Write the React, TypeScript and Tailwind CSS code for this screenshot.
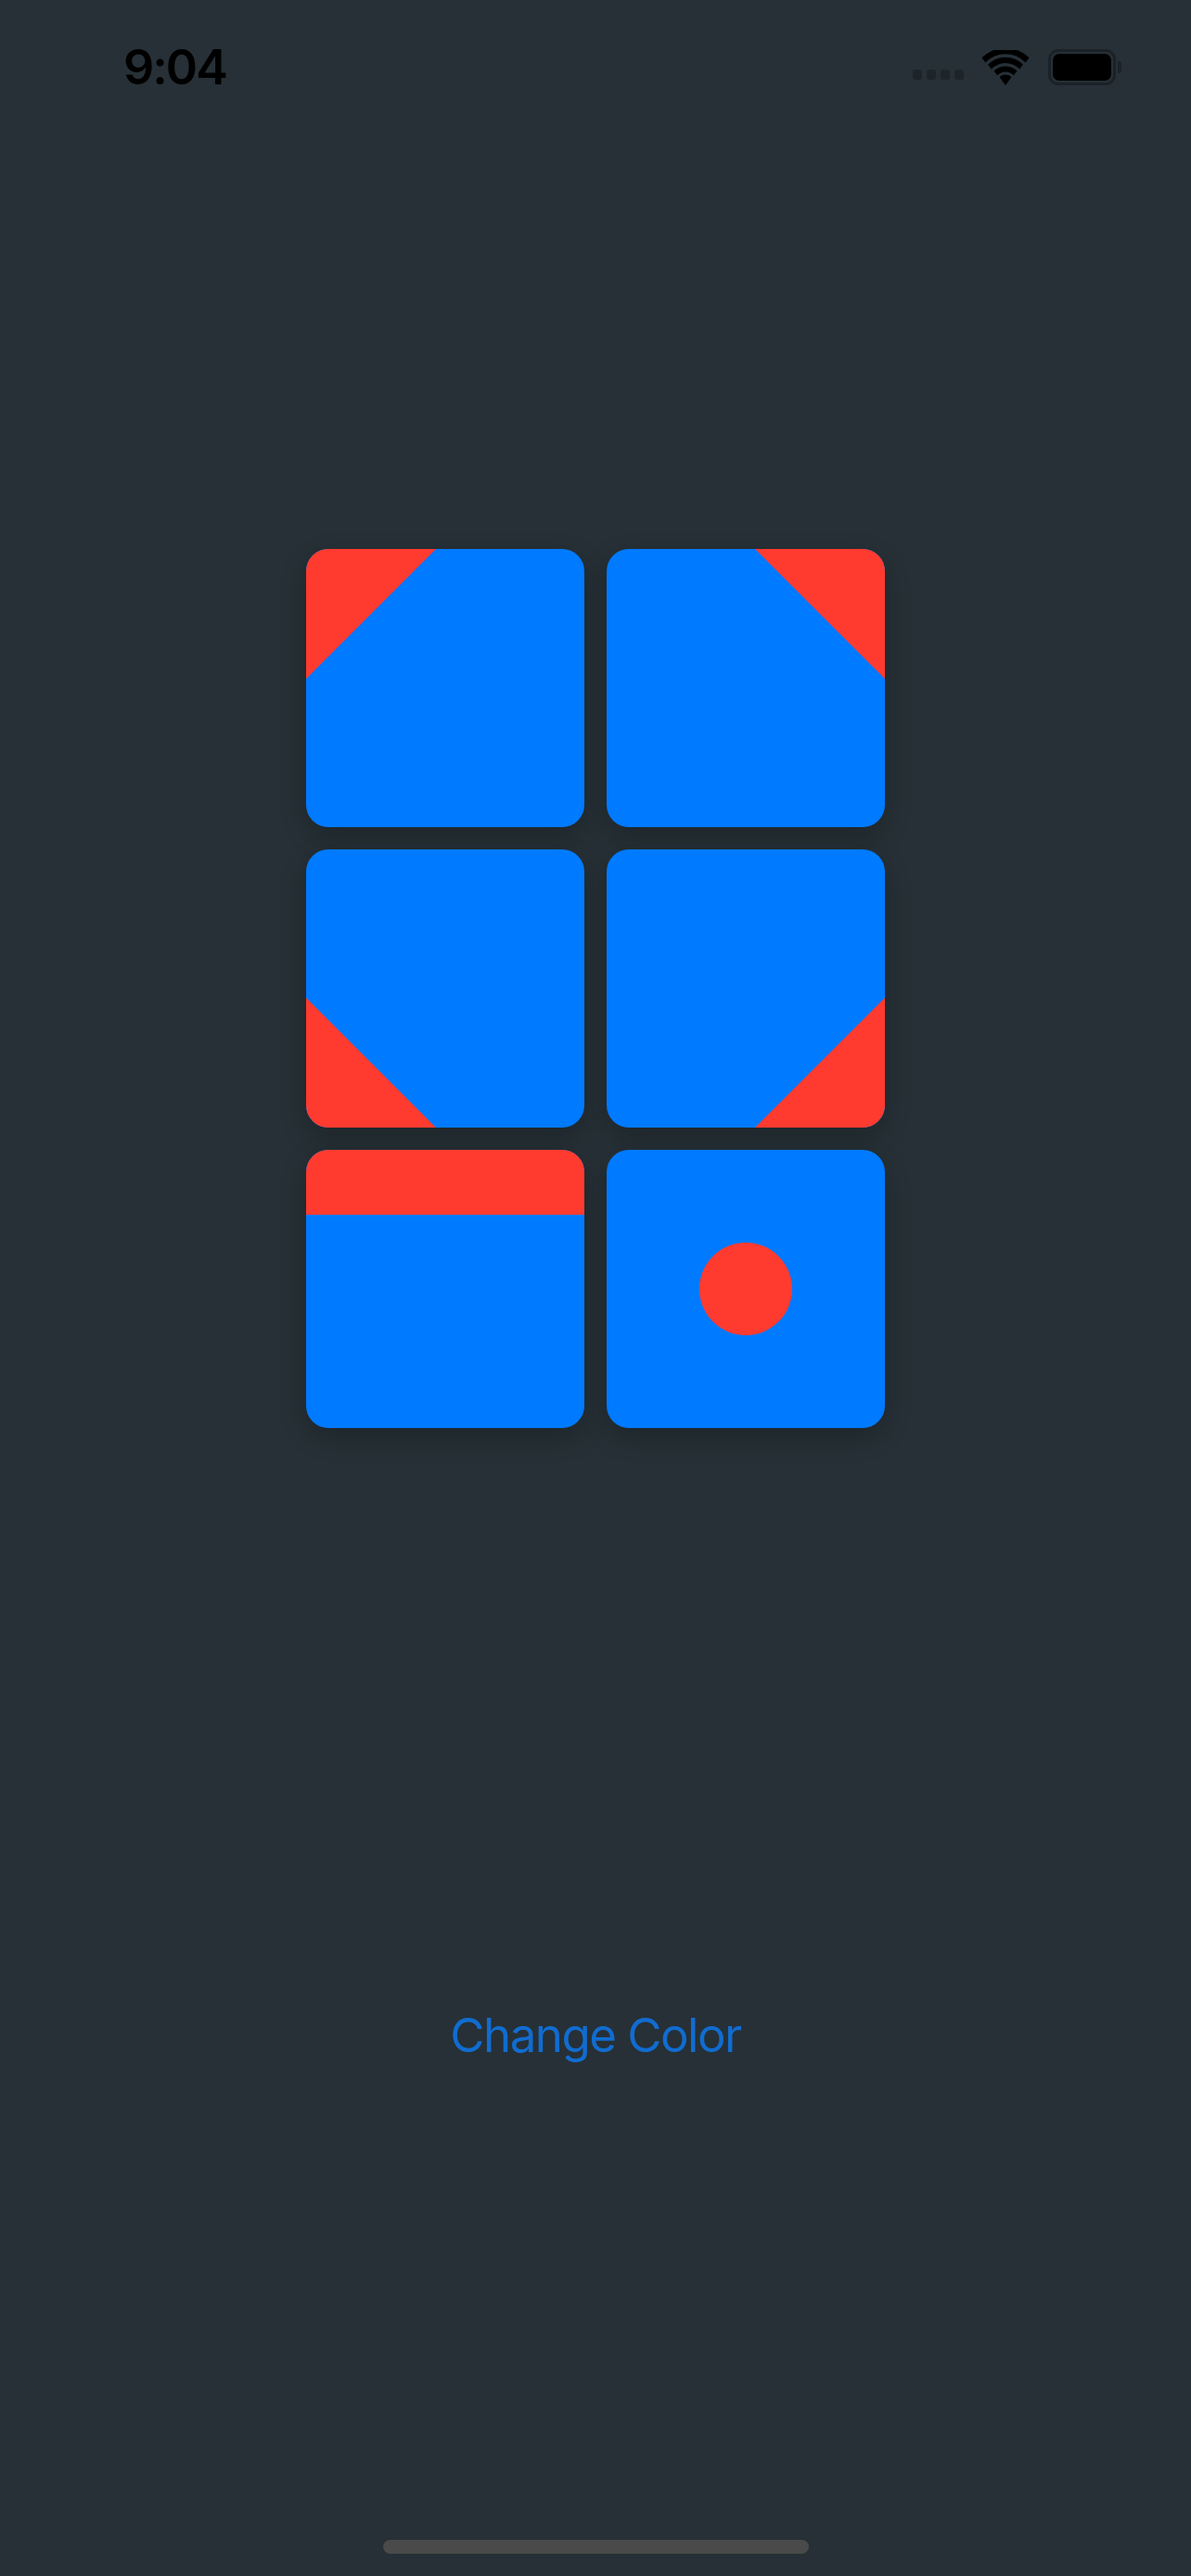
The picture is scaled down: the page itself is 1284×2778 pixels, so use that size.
import React from "react";

type Corner = "tl" | "tr" | "bl" | "br" | "band" | "dot";

const RED = "#FF3B30";

function TileMark({ kind }: { kind: Corner }) {
  return (
    <svg viewBox="0 0 300 300" className="h-full w-full">
      <rect width="300" height="300" fill="#007AFF" />
      {kind === "tl" && <polygon points="0,0 140,0 0,140" fill={RED} />}
      {kind === "tr" && <polygon points="160,0 300,0 300,140" fill={RED} />}
      {kind === "bl" && <polygon points="0,160 0,300 140,300" fill={RED} />}
      {kind === "br" && <polygon points="300,160 300,300 160,300" fill={RED} />}
      {kind === "band" && <rect width="300" height="70" fill={RED} />}
      {kind === "dot" && <circle cx="150" cy="150" r="50" fill={RED} />}
    </svg>
  );
}

function Tile({ kind }: { kind: Corner }) {
  return (
    <div className="h-[300px] w-[300px] overflow-hidden rounded-[24px] shadow-[0_10px_28px_rgba(0,0,0,0.22)]">
      <TileMark kind={kind} />
    </div>
  );
}

function StatusBar() {
  return (
    <div className="flex h-[145px] items-center justify-between pl-[133px] pr-[75px]">
      <span
        className="text-[52px] font-semibold leading-none tracking-[-2px] text-black"
        style={{ fontFamily: "Inter, 'Liberation Sans', sans-serif" }}
      >
        9:04
      </span>
      <div className="flex items-center">
        <div className="mr-[19px] mt-[16px] flex items-end gap-[5px]">
          {[0, 1, 2, 3].map((i) => (
            <div key={i} className="h-[11px] w-[10px] rounded-[3px] bg-[#1d252a]" />
          ))}
        </div>
        <svg width="52" height="38" viewBox="0 0 52 38" className="mr-[20px]">
          <path d="M26 38 L19.5 29 A10 10 0 0 1 32.5 29 Z" fill="#000" />
          <path d="M13.5 22.5 A18 18 0 0 1 38.5 22.5 L34.8 27.3 A12 12 0 0 0 17.2 27.3 Z" fill="#000" />
          <path d="M7 15.5 A27 27 0 0 1 45 15.5 L41.2 20.5 A21 21 0 0 0 10.8 20.5 Z" fill="#000" />
          <path d="M0.5 8.3 A36 36 0 0 1 51.5 8.3 L47.6 13.4 A30 30 0 0 0 4.4 13.4 Z" fill="#000" />
        </svg>
        <div className="flex items-center">
          <div className="flex h-[39px] w-[73px] items-center justify-center rounded-[11px] border-[3px] border-[#1b2227]">
            <div className="h-[29px] w-[63px] rounded-[7px] bg-black" />
          </div>
          <div className="ml-[2px] h-[13px] w-[4px] rounded-r-[3px] bg-[#1b2227]" />
        </div>
      </div>
    </div>
  );
}

export default function App() {
  const kinds: Corner[] = ["tl", "tr", "bl", "br", "band", "dot"];
  return (
    <div className="flex h-[2778px] w-[1284px] flex-col bg-[#263036]">
      <StatusBar />
      <div className="mt-[447px] flex justify-center">
        <div className="grid grid-cols-2 gap-[24px]">
          {kinds.map((k) => (
            <Tile key={k} kind={k} />
          ))}
        </div>
      </div>
      <div className="mt-[624px] flex justify-center">
        <button
          className="text-[51px] leading-[61px] tracking-[-1.5px] text-[#116cd0]"
          style={{ fontFamily: "Inter, 'Liberation Sans', sans-serif" }}
        >
          Change Color
        </button>
      </div>
      <div className="mt-auto mb-[24px] flex justify-center">
        <div className="h-[15px] w-[459px] rounded-full bg-[#4a4a4a]" />
      </div>
    </div>
  );
}
